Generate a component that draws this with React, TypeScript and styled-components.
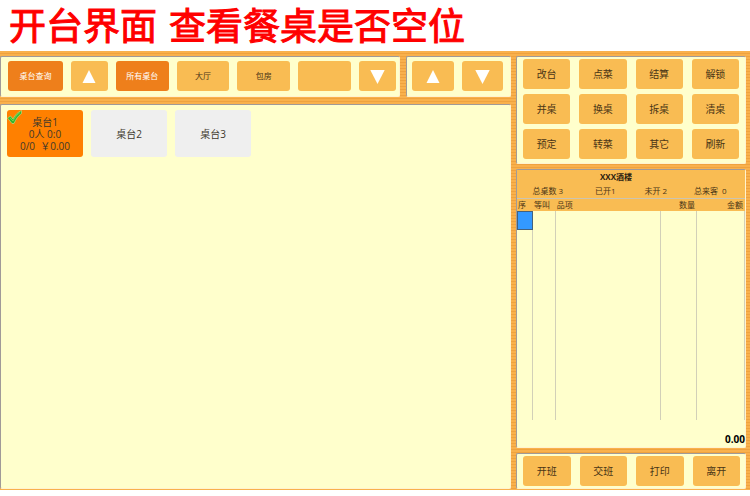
import React from "react";
import styled, { createGlobalStyle } from "styled-components";

const GlobalStyle = createGlobalStyle`
  *, *::before, *::after { box-sizing: border-box; }
  body {
    margin: 0;
    background: #ffffff;
    color: #4a3516;
    font-family: "Open Sans", "Noto Sans CJK SC", sans-serif;
  }
  button { font: inherit; color: inherit; cursor: pointer; }
`;

const Page = styled.div`
  display: flex;
  flex-direction: column;
  height: 100vh;
  min-height: 400px;
  padding-bottom: 6px;
`;

const Title = styled.h1`
  display: flex;
  gap: 12px;
  margin: 0;
  padding: 0 9px;
  font-size: 37px;
  font-weight: 400;
  line-height: 51px;
  white-space: nowrap;
  color: #ff0000;
  -webkit-text-stroke: 1px #ff0000;
`;

const Board = styled.main`
  flex: 1;
  min-height: 0;
  display: grid;
  grid-template-columns: minmax(0, 511fr) minmax(0, 230fr);
  gap: 5px;
  padding: 5px 4px 0 0;
  background: repeating-linear-gradient(to bottom, #f9b14c 0 2px, #efa23e 2px 3px);
`;

const Column = styled.div<{ $gap: number }>`
  display: flex;
  flex-direction: column;
  gap: ${(p) => p.$gap}px;
  min-height: 0;
  padding-bottom: 1px;
`;

const Panel = styled.section<{ $grow?: boolean }>`
  flex: ${(p) => (p.$grow ? "1" : "none")};
  min-height: 0;
  border: 1px solid #fff3cf;
  border-top-color: #a09a98;
  border-left-color: #a09a98;
  border-radius: 2px;
  background: #ffffcc;
`;

const Toolbars = styled.div`
  display: grid;
  grid-template-columns: minmax(0, 400fr) minmax(0, 105fr);
  gap: 6px;
`;

const Toolbar = styled(Panel)<{ $columns: string; $padding: string }>`
  display: grid;
  grid-template-columns: ${(p) => p.$columns};
  gap: 8px;
  padding: ${(p) => p.$padding};
`;

const Button = styled.button<{ $active?: boolean; $small?: boolean }>`
  display: flex;
  align-items: center;
  justify-content: center;
  height: 30px;
  min-width: 0;
  padding: 0;
  border: 0;
  border-radius: 3px;
  background: ${(p) => (p.$active ? "#ee7f1b" : "#f9bc53")};
  color: ${(p) => (p.$active ? "#ffffff" : "#4a3516")};
  font-size: ${(p) => (p.$small ? 8 : 10)}px;
  line-height: 14px;
  white-space: nowrap;
`;

const Tables = styled(Panel)`
  display: flex;
  flex-wrap: wrap;
  align-content: flex-start;
  gap: 8px;
  padding: 5px 6px;
`;

const TableCard = styled.button<{ $selected?: boolean }>`
  position: relative;
  width: 76px;
  height: 47px;
  padding: 0;
  border: 0;
  border-radius: 3px;
  background: ${(p) => (p.$selected ? "#ff8000" : "#efefef")};
  color: #40382c;
  font-size: 10px;
  line-height: 12px;
`;

const CardLine = styled.span`
  display: block;
  white-space: pre;
`;

const CheckMark = styled.svg`
  position: absolute;
  top: 0;
  left: 0;
  width: 16px;
  height: 15px;
`;

const Actions = styled(Panel)<{ $tight?: boolean }>`
  display: grid;
  grid-template-columns: repeat(4, minmax(0, 1fr));
  gap: 5px 9px;
  padding: ${(p) => (p.$tight ? "2px 5px 2px 6px" : "2px 6px 4px")};
`;

const Order = styled(Panel)`
  display: flex;
  flex-direction: column;
`;

const Summary = styled.header`
  border-bottom: 1px solid #ccc4b0;
  background: #f9bc53;
  font-size: 8px;
`;

const ShopName = styled.h2`
  margin: 0;
  padding-right: 30px;
  font-size: 8px;
  font-weight: 700;
  line-height: 13px;
  text-align: center;
  color: #2c2110;
`;

const Stats = styled.div`
  display: grid;
  grid-template-columns: 62fr 54fr 48fr 62fr;
  padding-right: 4px;
  line-height: 15px;
  text-align: center;
  white-space: pre;
`;

const OrderBody = styled.div`
  flex: 1;
  min-height: 0;
`;

const OrderTable = styled.table`
  width: 100%;
  height: 100%;
  table-layout: fixed;
  border-collapse: separate;
  border-spacing: 0;
  font-size: 8px;
`;

const Col = styled.col<{ $share: number }>`
  width: ${(p) => p.$share}%;
`;

const Th = styled.th<{ $right?: boolean }>`
  height: 12px;
  padding: 0 2px 0 1px;
  background: #f9bc53;
  font-weight: 400;
  line-height: 12px;
  text-align: ${(p) => (p.$right ? "right" : "left")};
  white-space: nowrap;
`;

const Td = styled.td<{ $selected?: boolean; $fill?: boolean }>`
  height: ${(p) => (p.$fill ? "auto" : "19px")};
  padding: 0;
  border-right: 1px solid #d2d0b8;
  ${(p) => p.$selected && "background: #3399ff; border: 1px solid #44617c;"}
`;

const Total = styled.output`
  padding-top: 11px;
  font-size: 10px;
  font-weight: 700;
  line-height: 16px;
  text-align: right;
  color: #000000;
`;

const Up = () => (
  <svg width="14" height="14" viewBox="0 0 14 14" aria-hidden="true">
    <path d="M7 1 L13.5 14 H0.5 Z" fill="#ffffff" />
  </svg>
);

const Down = () => (
  <svg width="15" height="15" viewBox="0 0 15 15" aria-hidden="true">
    <path d="M0.3 1 H14.7 L7.5 15 Z" fill="#ffffff" />
  </svg>
);

const actions = ["改台", "点菜", "结算", "解锁", "并桌", "换桌", "拆桌", "清桌", "预定", "转菜", "其它", "刷新"];
const shiftActions = ["开班", "交班", "打印", "离开"];
const stats = ["总桌数 3", "已开1", "未开 2", "总来客  0"];
const columns = [
  { name: "序", share: 7 },
  { name: "等叫", share: 10 },
  { name: "品项", share: 46 },
  { name: "数量", share: 16, right: true },
  { name: "金额", share: 21, right: true },
];

export default function App() {
  return (
    <Page>
      <GlobalStyle />
      <Title>
        <span>开台界面</span>
        <span>查看餐桌是否空位</span>
      </Title>
      <Board>
        <Column $gap={7}>
          <Toolbars>
            <Toolbar $columns="55fr 37fr 53fr 53fr 53fr 53fr 37fr" $padding="4px 3px 5px 7px">
              <Button $active $small>桌台查询</Button>
              <Button aria-label="上一页区域"><Up /></Button>
              <Button $active $small>所有桌台</Button>
              <Button $small>大厅</Button>
              <Button $small>包房</Button>
              <Button $small aria-label="空区域" />
              <Button aria-label="下一页区域"><Down /></Button>
            </Toolbar>
            <Toolbar $columns="1fr 1fr" $padding="4px 7px 5px 5px">
              <Button aria-label="上一页桌台"><Up /></Button>
              <Button aria-label="下一页桌台"><Down /></Button>
            </Toolbar>
          </Toolbars>
          <Tables $grow>
            <TableCard $selected>
              <CheckMark viewBox="0 0 16 15" aria-hidden="true">
                <path d="M0.5 8 L3.5 6 L6 9 C8 5 11 2 14.5 0.5 L14.5 3.5 C11 6 9 9 7 13.5 H5 Z" fill="#35b52c" stroke="#c9efa6" strokeWidth="0.5" />
                <path d="M3 7.8 L6 11 C8 7 10 4.5 13 2.5" fill="none" stroke="#7edb5e" strokeWidth="0.8" />
              </CheckMark>
              <CardLine>桌台1</CardLine>
              <CardLine>0人 0:0</CardLine>
              <CardLine>0/0  ￥0.00</CardLine>
            </TableCard>
            <TableCard>桌台2</TableCard>
            <TableCard>桌台3</TableCard>
          </Tables>
        </Column>
        <Column $gap={5}>
          <Actions>
            {actions.map((name) => <Button key={name}>{name}</Button>)}
          </Actions>
          <Order $grow>
            <Summary>
              <ShopName>XXX酒楼</ShopName>
              <Stats>
                {stats.map((text) => <span key={text}>{text}</span>)}
              </Stats>
            </Summary>
            <OrderBody>
              <OrderTable>
                <colgroup>
                  {columns.map((c) => <Col key={c.name} $share={c.share} />)}
                </colgroup>
                <thead>
                  <tr>{columns.map((c) => <Th key={c.name} $right={c.right}>{c.name}</Th>)}</tr>
                </thead>
                <tbody>
                  <tr>{columns.map((c, i) => <Td key={c.name} $selected={i === 0} />)}</tr>
                  <tr>{columns.map((c) => <Td key={c.name} $fill />)}</tr>
                </tbody>
              </OrderTable>
            </OrderBody>
            <Total>0.00</Total>
          </Order>
          <Actions $tight>
            {shiftActions.map((name) => <Button key={name}>{name}</Button>)}
          </Actions>
        </Column>
      </Board>
    </Page>
  );
}
